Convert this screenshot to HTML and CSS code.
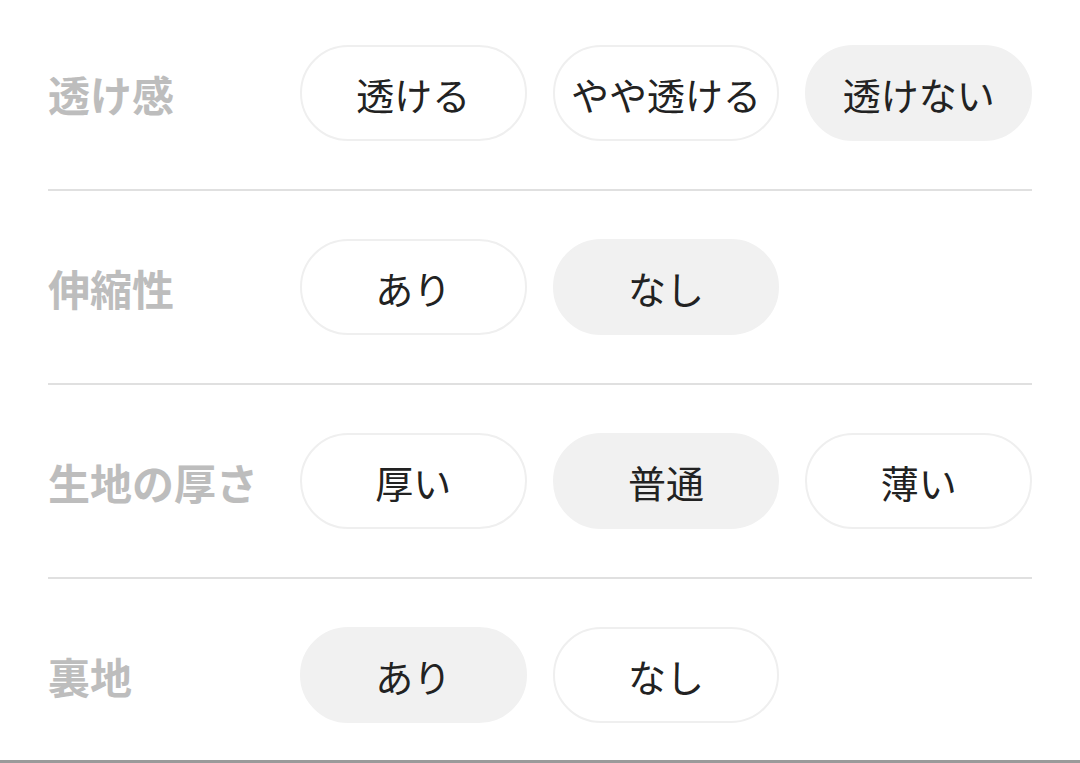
FILE: index.html
```html
<!DOCTYPE html>
<html lang="ja">
<head>
    <meta charset="UTF-8">
    <meta name="viewport" content="width=device-width, initial-scale=1.0">
    <title>素材の特徴</title>
    <link rel="stylesheet" href="styles.css">
</head>
<body>

    <!-- Fabric attributes -->
    <div class="spec-list">
        <div class="spec-row">
            <div class="spec-label">透け感</div>
            <div class="pill">透ける</div>
            <div class="pill">やや透ける</div>
            <div class="pill active">透けない</div>
        </div>
        <div class="spec-row">
            <div class="spec-label">伸縮性</div>
            <div class="pill">あり</div>
            <div class="pill active">なし</div>
        </div>
        <div class="spec-row">
            <div class="spec-label">生地の厚さ</div>
            <div class="pill">厚い</div>
            <div class="pill active">普通</div>
            <div class="pill">薄い</div>
        </div>
        <div class="spec-row last">
            <div class="spec-label">裏地</div>
            <div class="pill active">あり</div>
            <div class="pill">なし</div>
        </div>
    </div>

</body>
</html>
```

FILE: styles.css
```css
* {
    margin: 0;
    padding: 0;
    box-sizing: border-box;
    font-family: "Noto Sans CJK JP", "Noto Sans", sans-serif;
}
body {
    background: #fff;
    width: 1080px;
    height: 763px;
    overflow: hidden;
}
.spec-list {
    margin: 0 48px;
}
.spec-row {
    display: grid;
    grid-template-columns: 226px repeat(3, 1fr);
    column-gap: 26px;
    align-items: center;
    padding: 48px 0;
    border-bottom: 2px solid #e0e0e0;
}
.spec-row:first-child { padding-top: 45px; }
.spec-row.last {
    margin: 0 -48px;
    padding: 48px 48px 37px;
    border-bottom: 3px solid #9a9a9a;
}
.spec-label {
    font-size: 42px;
    font-weight: 700;
    color: #bdbdbd;
    white-space: nowrap;
}
.pill {
    height: 96px;
    border: 2px solid #efefef;
    border-radius: 48px;
    display: flex;
    align-items: center;
    justify-content: center;
    font-size: 38px;
    color: #222;
    background: #fff;
}
.pill.active {
    background: #f1f1f1;
    border-color: #f1f1f1;
}
```
